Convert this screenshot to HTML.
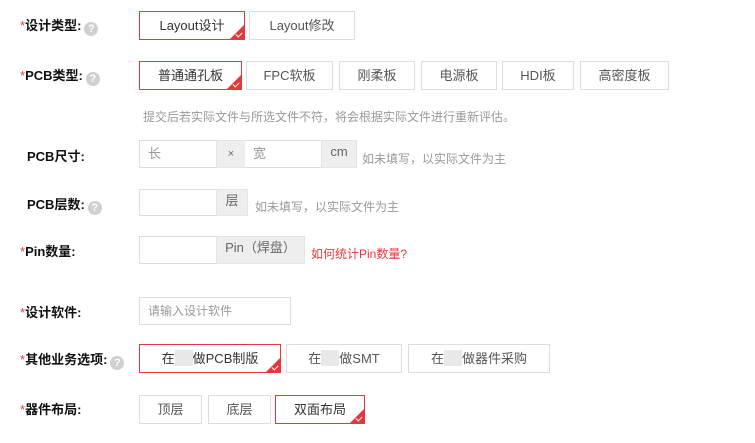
<!DOCTYPE html>
<html><head><meta charset="utf-8"><style>
body{margin:0;width:755px;height:443px;background:#fff;font-family:"Liberation Sans","Noto Sans CJK SC",sans-serif;position:relative;overflow:hidden;color:#333}
.a{position:absolute}
.lbl{font-size:13px;font-weight:bold;color:#111;line-height:16px}
.lbl i{color:#e4393c;font-style:normal;font-weight:normal}
.q{display:inline-block;width:14px;height:14px;border-radius:50%;background:#d0d0d0;color:#fff;font-size:11px;line-height:14px;text-align:center;font-weight:bold;vertical-align:-2px;margin-left:3px}
.b{position:absolute;box-sizing:border-box;border:1px solid #ddd;font-size:13px;text-align:center;color:#555;background:#fff;overflow:hidden}
.s{border:1px solid #e4393c;color:#333}
.s:after{content:"";position:absolute;right:0;bottom:0;border-style:solid;border-width:0 0 14px 14px;border-color:transparent transparent #e4393c transparent}
.s:before{content:"";position:absolute;right:2px;bottom:3px;width:5px;height:3px;border-left:1px solid #fff;border-bottom:1px solid #fff;transform:rotate(-45deg);z-index:2}
.g{position:absolute;box-sizing:border-box;background:#eee;border:1px solid #e5e5e5;font-size:13px;color:#666;text-align:center}
.h{position:absolute;font-size:12px;color:#999}
.blur{display:inline-block;width:18px;height:16px;background:#e8e8e8;vertical-align:-3px}
</style></head><body>
<div class="a lbl" style="left:20px;top:18px"><i>*</i>设计类型:<span class="q">?</span></div>
<div class="b s" style="left:139px;top:11px;width:106px;height:29px;line-height:27px">Layout设计</div>
<div class="b" style="left:249px;top:11px;width:106px;height:29px;line-height:27px">Layout修改</div>

<div class="a lbl" style="left:20px;top:68px"><i>*</i>PCB类型:<span class="q">?</span></div>
<div class="b s" style="left:139px;top:61px;width:103px;height:29px;line-height:27px">普通通孔板</div>
<div class="b" style="left:246px;top:61px;width:87px;height:29px;line-height:27px">FPC软板</div>
<div class="b" style="left:339px;top:61px;width:76px;height:29px;line-height:27px">刚柔板</div>
<div class="b" style="left:421px;top:61px;width:76px;height:29px;line-height:27px">电源板</div>
<div class="b" style="left:502px;top:61px;width:72px;height:29px;line-height:27px">HDI板</div>
<div class="b" style="left:580px;top:61px;width:89px;height:29px;line-height:27px">高密度板</div>
<div class="h" style="left:143px;top:108px">提交后若实际文件与所选文件不符，将会根据实际文件进行重新评估。</div>

<div class="a lbl" style="left:27px;top:149px">PCB尺寸:</div>
<div class="b" style="left:139px;top:140px;width:78px;height:28px;line-height:26px;text-align:left;padding-left:8px;color:#999">长</div>
<div class="g" style="left:216px;top:140px;width:30px;height:28px;line-height:26px;font-size:11px">×</div>
<div class="b" style="left:245px;top:140px;width:77px;height:28px;line-height:26px;text-align:left;padding-left:8px;color:#999;border-left:0">宽</div>
<div class="g" style="left:321px;top:140px;width:36px;height:28px;line-height:22px">cm</div>
<div class="h" style="left:362px;top:150px">如未填写，以实际文件为主</div>

<div class="a lbl" style="left:27px;top:197px">PCB层数:<span class="q">?</span></div>
<div class="b" style="left:139px;top:189px;width:78px;height:27px"></div>
<div class="g" style="left:216px;top:189px;width:32px;height:27px;line-height:22px">层</div>
<div class="h" style="left:255px;top:198px">如未填写，以实际文件为主</div>

<div class="a lbl" style="left:20px;top:244px"><i>*</i>Pin数量:</div>
<div class="b" style="left:139px;top:236px;width:78px;height:28px"></div>
<div class="g" style="left:216px;top:236px;width:89px;height:28px;line-height:22px">Pin（焊盘）</div>
<div class="a" style="left:311px;top:245px;font-size:12px;color:#e4393c">如何统计Pin数量?</div>

<div class="a lbl" style="left:20px;top:305px"><i>*</i>设计软件:</div>
<div class="b" style="left:139px;top:297px;width:152px;height:28px;line-height:26px;text-align:left;padding-left:8px;color:#999;font-size:12px">请输入设计软件</div>

<div class="a lbl" style="left:20px;top:352px"><i>*</i>其他业务选项:<span class="q">?</span></div>
<div class="b s" style="left:139px;top:344px;width:142px;height:29px;line-height:27px">在<span class="blur"></span>做PCB制版</div>
<div class="b" style="left:286px;top:344px;width:116px;height:29px;line-height:27px">在<span class="blur"></span>做SMT</div>
<div class="b" style="left:408px;top:344px;width:142px;height:29px;line-height:27px">在<span class="blur"></span>做器件采购</div>

<div class="a lbl" style="left:20px;top:402px"><i>*</i>器件布局:</div>
<div class="b" style="left:139px;top:395px;width:63px;height:29px;line-height:27px">顶层</div>
<div class="b" style="left:208px;top:395px;width:63px;height:29px;line-height:27px">底层</div>
<div class="b s" style="left:275px;top:395px;width:90px;height:29px;line-height:27px">双面布局</div>
</body></html>
